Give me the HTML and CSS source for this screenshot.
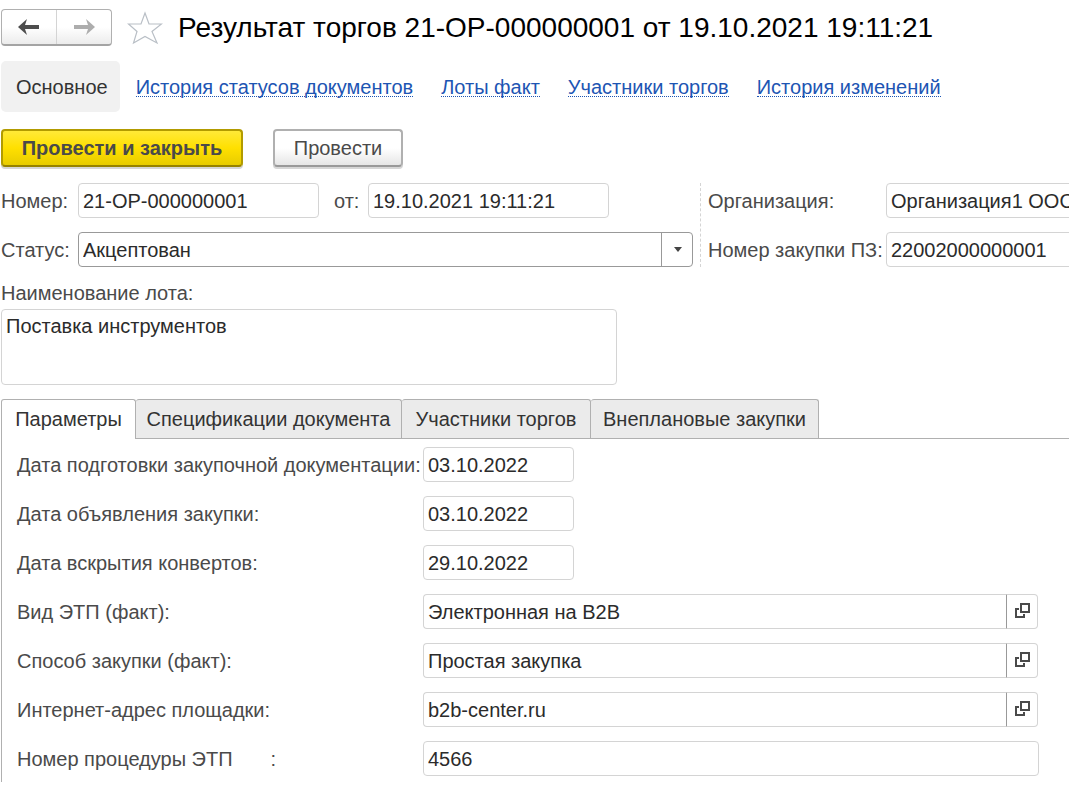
FILE: index.html
```html
<!DOCTYPE html>
<html lang="ru">
<head>
<meta charset="utf-8">
<meta name="viewport" content="width=device-width, initial-scale=1">
<title>Результат торгов 21-ОР-000000001</title>
<link rel="stylesheet" href="styles.css">
</head>
<body>
<svg class="sprite" aria-hidden="true">
  <symbol id="open" viewBox="0 0 16 16">
    <path d="M6 1h8v8H6z M4 6H1v8h8v-3" fill="none" stroke="#4a4a4a" stroke-width="2"/>
  </symbol>
</svg>
<main class="page">
  <header class="header">
    <div class="history">
      <button class="history-btn" type="button" aria-label="Назад">
        <svg width="22" height="16" viewBox="0 0 22 16"><path d="M0 8 9 0 7 6H21V10H7L9 16Z" fill="#4d4d4d"/></svg>
      </button>
      <button class="history-btn" type="button" aria-label="Вперёд">
        <svg width="22" height="16" viewBox="0 0 22 16"><path d="M22 8 13 0 15 6H1V10H15L13 16Z" fill="#adadad"/></svg>
      </button>
    </div>
    <button class="star" type="button" aria-label="В избранное">
      <svg width="36" height="34" viewBox="0 0 36 34"><path d="M18 2 22 13H34.500L25 20.500 30 32 18 25.500 6.500 32 10 20.500 1.500 13H14Z" fill="none" stroke="#b9bfc6" stroke-width="1.200"/></svg>
    </button>
    <h1 class="title">Результат торгов 21-ОР-000000001 от 19.10.2021 19:11:21</h1>
  </header>

  <nav class="nav">
    <span class="nav-current">Основное</span>
    <a class="nav-link" href="#statuses">История статусов документов</a>
    <a class="nav-link" href="#lots">Лоты факт</a>
    <a class="nav-link" href="#members">Участники торгов</a>
    <a class="nav-link" href="#changes">История изменений</a>
  </nav>

  <div class="commands">
    <button class="btn btn-primary" type="button">Провести и закрыть</button>
    <button class="btn" type="button">Провести</button>
  </div>

  <div class="summary">
    <div class="summary-main">
      <label for="num">Номер:</label>
      <div class="number-line">
        <input class="field" id="num" value="21-ОР-000000001">
        <label class="from" for="date">от:</label>
        <input class="field" id="date" value="19.10.2021 19:11:21">
      </div>
      <label for="status">Статус:</label>
      <div class="select">
        <select class="field select-field" id="status"><option>Акцептован</option></select>
        <span class="select-arrow"><svg width="8" height="5" viewBox="0 0 8 5"><path d="M0 0H8L4 5Z" fill="#444"/></svg></span>
      </div>
    </div>
    <div class="summary-side">
      <label for="org">Организация:</label>
      <input class="field" id="org" value="Организация1 ООО">
      <label for="plan">Номер закупки ПЗ:</label>
      <input class="field" id="plan" value="22002000000001">
    </div>
  </div>

  <div class="lot">
    <label for="lot">Наименование лота:</label>
    <textarea class="field lot-text" id="lot">Поставка инструментов</textarea>
  </div>

  <div class="tabs" role="tablist">
    <button class="tab tab-active" type="button" role="tab" aria-selected="true">Параметры</button>
    <button class="tab" type="button" role="tab">Спецификации документа</button>
    <button class="tab" type="button" role="tab">Участники торгов</button>
    <button class="tab" type="button" role="tab">Внеплановые закупки</button>
  </div>

  <section class="panel" role="tabpanel">
    <label for="p1">Дата подготовки закупочной документации:</label>
    <input class="field field-date" id="p1" value="03.10.2022">
    <label for="p2">Дата объявления закупки:</label>
    <input class="field field-date" id="p2" value="03.10.2022">
    <label for="p3">Дата вскрытия конвертов:</label>
    <input class="field field-date" id="p3" value="29.10.2022">
    <label for="p4">Вид ЭТП (факт):</label>
    <div class="ref">
      <input class="field ref-field" id="p4" value="Электронная на B2B">
      <button class="ref-open" type="button" aria-label="Открыть"><svg width="16" height="16"><use href="#open"/></svg></button>
    </div>
    <label for="p5">Способ закупки (факт):</label>
    <div class="ref">
      <input class="field ref-field" id="p5" value="Простая закупка">
      <button class="ref-open" type="button" aria-label="Открыть"><svg width="16" height="16"><use href="#open"/></svg></button>
    </div>
    <label for="p6">Интернет-адрес площадки:</label>
    <div class="ref">
      <input class="field ref-field" id="p6" value="b2b-center.ru">
      <button class="ref-open" type="button" aria-label="Открыть"><svg width="16" height="16"><use href="#open"/></svg></button>
    </div>
    <label class="spaced" for="p7"><span>Номер процедуры ЭТП</span><span>:</span></label>
    <input class="field" id="p7" value="4566">
  </section>
</main>
</body>
</html>
```
FILE: styles.css
```css
* { box-sizing: border-box; }

body {
  margin: 0;
  background: #fff;
  color: #4a4a4a;
  font: 20px/24px "Liberation Sans", Arial, sans-serif;
}

button, input, select, textarea { font: inherit; }
button { cursor: pointer; }
.sprite { display: none; }

.page {
  padding: 9px 0 3px 1px;
  overflow: hidden;
}

.header { display: flex; align-items: center; }

.history {
  display: flex;
  width: 111px;
  height: 37px;
  border: 1px solid #b0b0b0;
  border-bottom: 2px solid #a4a4a4;
  border-radius: 4px;
  background: linear-gradient(#fff 50%, #ececec);
}

.history-btn {
  flex: 1;
  display: grid;
  place-items: center;
  padding: 0;
  border: 0;
  background: none;
}

.history-btn + .history-btn { border-left: 1px solid #d4d4d4; }

.star {
  display: flex;
  margin-left: 15px;
  padding: 0;
  border: 0;
  background: none;
}

.title {
  margin: 0 0 0 15px;
  color: #000;
  font-size: 28px;
  font-weight: 400;
  line-height: 36px;
  white-space: nowrap;
}

.nav {
  display: flex;
  align-items: center;
  gap: 28px;
  margin-top: 15px;
  white-space: nowrap;
}

.nav-current {
  margin-right: -12px;
  padding: 14px 12px 13px 15px;
  border-radius: 5px;
  background: #f1f1f1;
  color: #333;
}

.nav-link {
  padding-top: 2px;
  border-bottom: 1px dotted #1d55b3;
  color: #1d55b3;
  line-height: 18px;
  text-decoration: none;
}

.commands { display: flex; gap: 30px; margin-top: 17px; }

.btn {
  height: 38px;
  min-width: 130px;
  padding: 0 18px;
  border: 2px solid #b0b0b0;
  border-bottom-color: #999;
  border-radius: 4px;
  background: linear-gradient(#fff 50%, #e6e6e6);
  box-shadow: 0 2px 0 #d6d6d6;
  color: #4a4a4a;
}

.btn-primary {
  min-width: 242px;
  border-color: #b29b00;
  border-bottom-color: #968200;
  background: linear-gradient(#ffe938, #ffe000 50%, #e8cc00);
  font-weight: 700;
}

.field {
  width: 100%;
  min-width: 0;
  height: 35px;
  padding: 2px 4px 0;
  border: 1px solid #d4d4d4;
  border-radius: 4px;
  outline: 0;
  background: #fff;
  color: #2b2b2b;
}

.summary { display: flex; gap: 7px; margin-top: 16px; white-space: nowrap; }

.summary-main {
  flex: none;
  display: grid;
  grid-template-columns: 77px 615px;
  row-gap: 14px;
  align-items: center;
}

.number-line {
  display: grid;
  grid-template-columns: 241px 49px 241px;
  align-items: center;
}

.from { padding-left: 15px; }

.select { position: relative; display: flex; }
.select-field { appearance: none; padding-top: 0; border-color: #999; }

.select-arrow {
  position: absolute;
  inset: 0 0 0 auto;
  display: grid;
  place-items: center;
  width: 32px;
  border-left: 1px solid #999;
  pointer-events: none;
}

.summary-side {
  flex: none;
  display: grid;
  grid-template-columns: 178px 240px;
  row-gap: 14px;
  align-items: center;
  padding-left: 7px;
  border-left: 1px dashed #d4d4d4;
}

.lot { width: 616px; margin-top: 14px; }
.lot label { display: block; }

.lot-text {
  display: block;
  height: 76px;
  margin-top: 4px;
  padding: 4px;
  resize: none;
}

.tabs {
  display: grid;
  grid-template-columns: 135px 266px 189px 228px;
  margin-top: 14px;
  border-bottom: 1px solid #b0b0b0;
  white-space: nowrap;
}

.tab {
  height: 39px;
  padding: 0;
  border: 1px solid #b0b0b0;
  border-width: 1px 1px 0 0;
  border-radius: 3px 3px 0 0;
  background: #ebebeb;
  color: #333;
}

.tab-active {
  height: 40px;
  margin-bottom: -1px;
  padding-bottom: 2px;
  border-left-width: 1px;
  background: #fff;
}

.panel {
  display: grid;
  grid-template-columns: 406px minmax(0, 616px);
  row-gap: 14px;
  align-items: center;
  padding: 8px 30px 6px 15px;
  border-left: 1px solid #b0b0b0;
  white-space: nowrap;
}

.field-date { width: 151px; }
.ref { display: flex; margin-right: 1px; }
.ref-field { flex: 1; border-right: 0; border-radius: 4px 0 0 4px; }

.ref-open {
  display: grid;
  place-items: center;
  width: 32px;
  padding: 0 0 1px 2px;
  border: 1px solid #d4d4d4;
  border-left-color: #999;
  border-radius: 0 4px 4px 0;
  background: #fff;
}

.spaced { display: flex; gap: 38px; }
```
